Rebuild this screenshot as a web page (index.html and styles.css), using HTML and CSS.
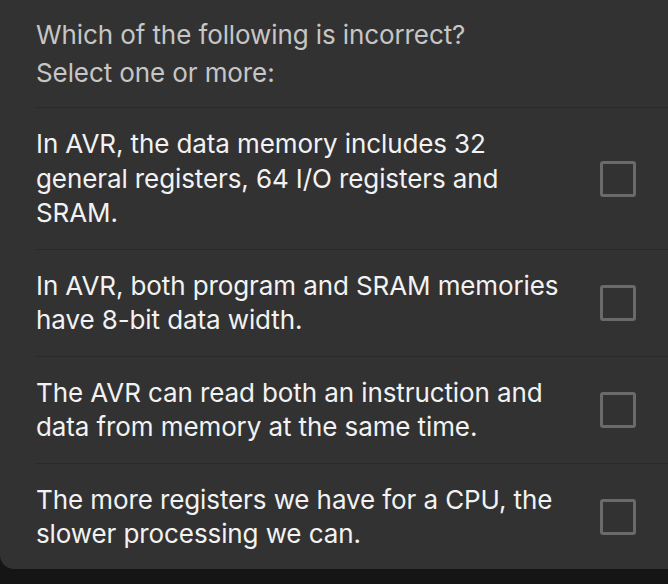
FILE: index.html
```html
<!DOCTYPE html>
<html>
<head>
<meta charset="utf-8">
<link rel="stylesheet" href="styles.css">
</head>
<body>
<div class="card">
  <div class="question">
    <div class="qtext">Which of the following is incorrect?</div>
    <div class="qtext">Select one or more:</div>
  </div>
  <div class="option">
    <div class="label">In AVR, the data memory includes 32 general registers, 64 I/O registers and SRAM.</div>
    <span class="box"></span>
  </div>
  <div class="option">
    <div class="label">In AVR, both program and SRAM memories have 8-bit data width.</div>
    <span class="box"></span>
  </div>
  <div class="option">
    <div class="label">The AVR can read both an instruction and data from memory at the same time.</div>
    <span class="box"></span>
  </div>
  <div class="option last">
    <div class="label">The more registers we have for a CPU, the slower processing we can.</div>
    <span class="box"></span>
  </div>
</div>
</body>
</html>
```
FILE: styles.css
```css
html, body {
  margin: 0;
  padding: 0;
  background: #151515;
  height: 100%;
}
body {
  font-family: Inter, "Noto Sans", "Liberation Sans", sans-serif;
  -webkit-font-smoothing: antialiased;
}
.card {
  background: #323232;
  height: 569px;
  border-bottom-left-radius: 14px;
  box-sizing: border-box;
}
.question {
  margin-left: 36px;
  padding: 16px 0 15px 0;
  border-bottom: 1px solid #2a2a2a;
}
.qtext {
  font-size: 26px;
  line-height: 38px;
  color: #c6c6c6;
  letter-spacing: -0.1px;
}
.option {
  display: flex;
  align-items: center;
  margin-left: 36px;
  padding: 19px 0 18px 0;
  border-bottom: 1px solid #2a2a2a;
}
.option.last {
  border-bottom: none;
}
.label {
  width: 530px;
  font-size: 26px;
  line-height: 34.5px;
  color: #f2f2f2;
  letter-spacing: -0.1px;
}
.box {
  width: 30px;
  height: 30px;
  border: 3px solid #6a6a6a;
  border-radius: 3px;
  margin-left: 34px;
  flex: none;
}
```
